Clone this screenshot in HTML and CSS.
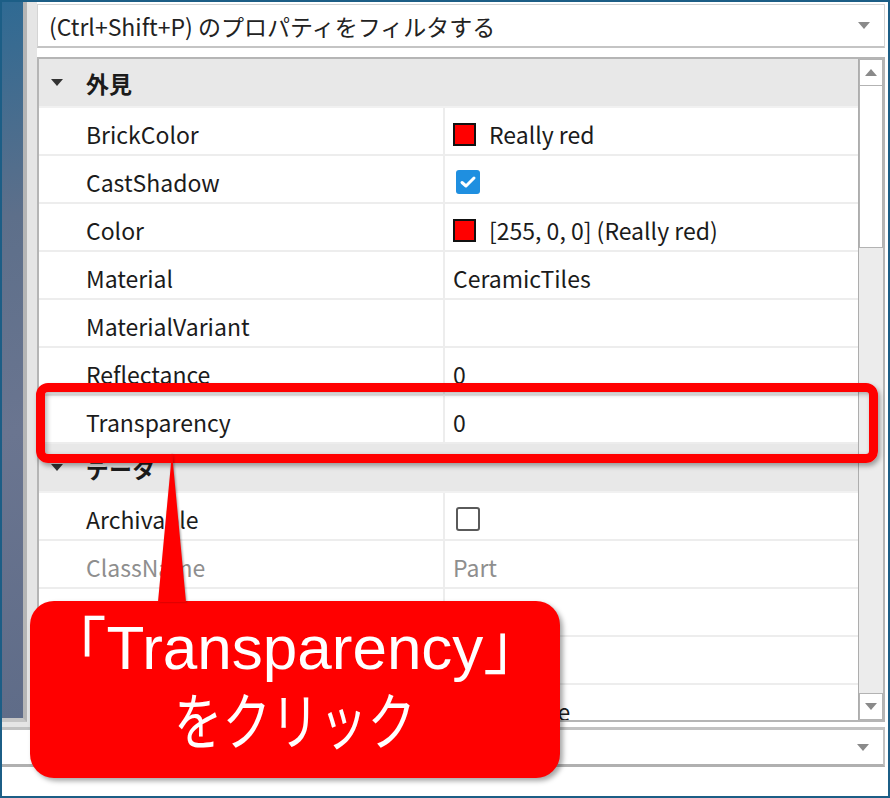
FILE: index.html
```html
<!DOCTYPE html>
<html lang="ja">

<head>
    <meta charset="UTF-8">
    <title>プロパティ</title>
    <link rel="stylesheet" href="styles.css">
</head>

<body>

    <div class="frame">
        <div class="main">
            <div class="side">
                <div class="viewport"></div>
            </div>

            <div class="inspector">
                <div class="filter">
                    <span>(Ctrl+Shift+P) のプロパティをフィルタする</span>
                    <span class="caret"></span>
                </div>

                <div class="grid">
                    <div class="rows">
                        <div class="group"><span class="tri"></span>外見</div>
                        <div class="row">
                            <div class="name">BrickColor</div>
                            <div class="value"><span class="swatch"></span>Really red</div>
                        </div>
                        <div class="row">
                            <div class="name">CastShadow</div>
                            <div class="value">
                                <span class="check on">
                                    <svg viewBox="0 0 24 24" width="24" height="24"><path d="M6 12.5l4 3.5 8-8" fill="none" stroke="#fff" stroke-width="3" stroke-linecap="round" stroke-linejoin="round"/></svg>
                                </span>
                            </div>
                        </div>
                        <div class="row">
                            <div class="name">Color</div>
                            <div class="value"><span class="swatch"></span>[255, 0, 0] (Really red)</div>
                        </div>
                        <div class="row">
                            <div class="name">Material</div>
                            <div class="value">CeramicTiles</div>
                        </div>
                        <div class="row">
                            <div class="name">MaterialVariant</div>
                            <div class="value"></div>
                        </div>
                        <div class="row">
                            <div class="name">Reflectance</div>
                            <div class="value">0</div>
                        </div>
                        <div class="row">
                            <div class="name">Transparency</div>
                            <div class="value">0</div>
                        </div>

                        <div class="group"><span class="tri"></span>データ</div>
                        <div class="row">
                            <div class="name">Archivable</div>
                            <div class="value"><span class="check off"></span></div>
                        </div>
                        <div class="row muted">
                            <div class="name">ClassName</div>
                            <div class="value">Part</div>
                        </div>
                        <div class="row">
                            <div class="name">Locked</div>
                            <div class="value"><span class="check off"></span></div>
                        </div>
                        <div class="row">
                            <div class="name">Name</div>
                            <div class="value">Part</div>
                        </div>
                        <div class="row">
                            <div class="name">Parent</div>
                            <div class="value">Workspace</div>
                        </div>
                    </div>

                    <div class="scrollbar">
                        <div class="sb-btn"><span class="arrow-up"></span></div>
                        <div class="thumb"></div>
                        <div class="track"></div>
                        <div class="sb-btn"><span class="caret"></span></div>
                    </div>
                </div>
            </div>
        </div>

        <div class="footer">
            <span class="caret"></span>
        </div>

        <!-- annotation layer -->
        <div class="highlight"></div>
        <div class="callout">
            <p class="line-1">「Transparency」</p>
            <p class="line-2"><span>をクリック</span></p>
        </div>
    </div>

</body>

</html>
```

FILE: styles.css
```css
* {
    box-sizing: border-box;
}

body {
    font-family: "Noto Sans CJK JP", "Noto Sans", sans-serif;
    margin: 0;
    padding: 0;
    color: #1b1b1b;
    background-color: #fff;
}

.frame {
    position: relative;
    width: 890px;
    height: 798px;
    border: 2px solid #1c5e86;
    background-color: #fff;
    display: flex;
    flex-direction: column;
}

.main {
    display: flex;
    height: 725px;
}

.side {
    width: 35px;
    background-color: #e5e5e5;
}

.viewport {
    width: 25px;
    height: 720px;
    background: linear-gradient(170deg, #2f6a93 0%, #5d6f8a 30%, #6a7590 60%, #5f6c88 100%);
    border-right: 4px solid #b5b5b5;
    border-bottom: 4px solid #c6c6c6;
}

.inspector {
    flex: 1;
    display: flex;
    flex-direction: column;
    gap: 9px;
    padding: 2px 3px 5px 0;
}

.filter {
    height: 44px;
    border: 1px solid #d4d4d4;
    border-bottom: 2px solid #c4c4c4;
    display: flex;
    align-items: center;
    justify-content: space-between;
    padding: 0 14px 0 11px;
    font-size: 23px;
    color: #222;
}

.caret {
    width: 0;
    height: 0;
    border-left: 6px solid transparent;
    border-right: 6px solid transparent;
    border-top: 7px solid #8a8a8a;
}

.arrow-up {
    width: 0;
    height: 0;
    border-left: 6px solid transparent;
    border-right: 6px solid transparent;
    border-bottom: 7px solid #8a8a8a;
}

.grid {
    flex: 1;
    display: flex;
    border: 2px solid #b5b5b5;
    overflow: hidden;
}

.rows {
    flex: 1;
    overflow: hidden;
}

.group {
    height: 49px;
    background-color: #e8e8e8;
    border-bottom: 2px solid #f1f1f1;
    display: flex;
    align-items: center;
    font-size: 23px;
    font-weight: 700;
}

.tri {
    width: 0;
    height: 0;
    border-left: 6px solid transparent;
    border-right: 6px solid transparent;
    border-top: 7px solid #333;
    margin: 0 23px 0 12px;
}

.row {
    display: grid;
    grid-template-columns: 406px 1fr;
    height: 48px;
    border-bottom: 2px solid #ededed;
    font-size: 23px;
}

.name {
    padding: 6px 0 0 47px;
    border-right: 2px solid #ededed;
    display: flex;
    align-items: center;
    white-space: nowrap;
}

.value {
    padding: 6px 0 0 8px;
    display: flex;
    align-items: center;
    gap: 13px;
    white-space: nowrap;
}

.muted {
    color: #8e8e8e;
}

.swatch {
    width: 23px;
    height: 23px;
    border: 2px solid #111;
    background-color: #ff0000;
}

.check {
    width: 24px;
    height: 24px;
    margin-left: 3px;
    border-radius: 3px;
}

.check.on {
    background-color: #1f8fe0;
}

.check svg {
    display: block;
}

.check.off {
    border: 2px solid #5a5a5a;
}

.scrollbar {
    width: 25px;
    border-left: 1px solid #adadad;
    background-color: #ececec;
    display: flex;
    flex-direction: column;
}

.sb-btn {
    height: 27px;
    background-color: #fff;
    border: 1px solid #b3b3b3;
    display: flex;
    align-items: center;
    justify-content: center;
}

.thumb {
    height: 162px;
    background-color: #fff;
    border: 1px solid #b3b3b3;
    border-top: 0;
}

.track {
    flex: 1;
}

.footer {
    height: 40px;
    margin-right: 3px;
    border-top: 3px solid #c2c2c2;
    border-right: 2px solid #c2c2c2;
    border-bottom: 3px solid #b0b0b0;
    display: flex;
    align-items: center;
    justify-content: flex-end;
    padding-right: 14px;
}

.highlight {
    position: absolute;
    left: 34px;
    top: 381px;
    width: 842px;
    height: 80px;
    border: 9px solid #ff0000;
    border-radius: 12px;
    box-shadow: 2px 3px 5px rgba(0, 0, 0, 0.35), inset 2px 2px 5px rgba(0, 0, 0, 0.3);
}

.callout {
    position: absolute;
    left: 28px;
    top: 599px;
    width: 530px;
    height: 177px;
    background-color: #ff0000;
    border-radius: 24px;
    box-shadow: 3px 3px 5px rgba(0, 0, 0, 0.35);
    color: #fff;
    text-align: center;
    padding-top: 12px;
}

.callout::before {
    content: "";
    position: absolute;
    left: 128px;
    top: -148px;
    width: 0;
    height: 0;
    border-left: 14px solid transparent;
    border-right: 14px solid transparent;
    border-bottom: 149px solid #ff0000;
    filter: drop-shadow(1px 0 1px rgba(0, 0, 0, 0.35));
}

.callout p {
    margin: 0;
    line-height: 70px;
    white-space: nowrap;
}

.line-1 {
    font-family: "Liberation Sans", "Noto Sans CJK JP", sans-serif;
    font-size: 62px;
}

.line-2 {
    font-family: "Noto Sans CJK JP", sans-serif;
    font-size: 62px;
}

.line-2 span {
    display: inline-block;
    transform: scaleX(0.78);
}
```
